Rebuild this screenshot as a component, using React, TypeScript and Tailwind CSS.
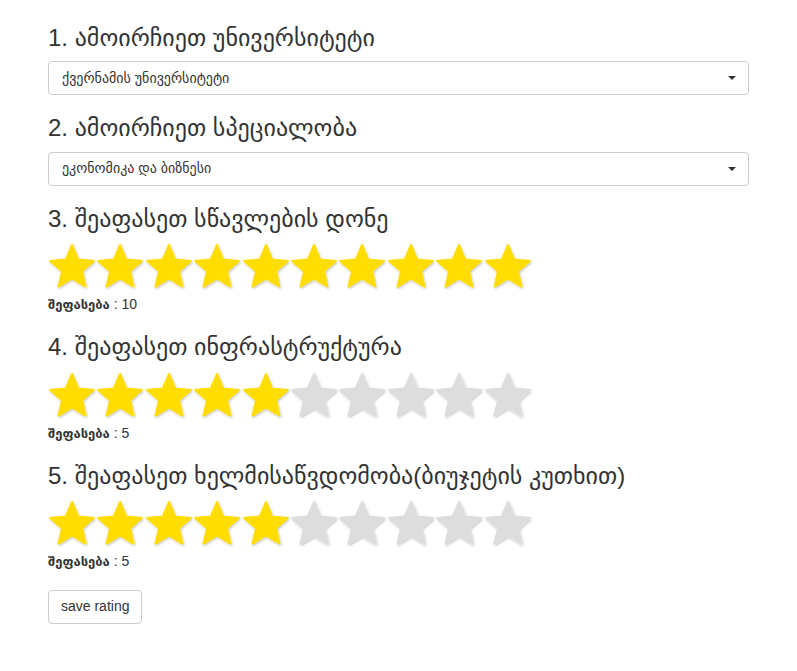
import React from "react";

const font = { fontFamily: '"Liberation Sans", "DejaVu Sans", sans-serif' };

function Star({ on }: { on: boolean }) {
  const fill = on ? "#FFDD00" : "#DDDDDD";
  return (
    <svg width="48.4" height="52" viewBox="0 0 48.4 52" className="block shrink-0">
      <defs>
        <filter id={on ? "sh1" : "sh0"} x="-10%" y="-10%" width="130%" height="130%">
          <feDropShadow dx="0.8" dy="1.2" stdDeviation="0.8" floodColor="#000" floodOpacity="0.25" />
        </filter>
      </defs>
      <polygon
        points="24,3 30.17,17.51 45.87,18.89 33.99,29.24 37.52,44.61 24,36.5 10.48,44.61 14.01,29.24 2.13,18.89 17.83,17.51"
        fill={fill}
        stroke={fill}
        strokeWidth="2"
        strokeLinejoin="round"
        filter={`url(#${on ? "sh1" : "sh0"})`}
      />
    </svg>
  );
}

function Stars({ value }: { value: number }) {
  return (
    <div className="flex h-[52px]">
      {Array.from({ length: 10 }).map((_, i) => (
        <Star key={i} on={i < value} />
      ))}
    </div>
  );
}

function Heading({ children }: { children: React.ReactNode }) {
  return (
    <h3 className="mt-[20px] mb-[10px] text-[24px] leading-[1.1] text-[#333]">{children}</h3>
  );
}

function Select({ text }: { text: string }) {
  return (
    <div className="flex h-[34px] items-center justify-between rounded-[4px] border border-[#ccc] bg-white pl-[13px] pr-[12px] text-[14px] text-[#333]">
      <span>{text}</span>
      <span className="h-0 w-0 border-x-[4px] border-t-[4px] border-x-transparent border-t-[#333]" />
    </div>
  );
}

function Rating({ value }: { value: number }) {
  return (
    <div className="mb-[2px] h-[20px] text-[14px] leading-[20px] text-[#333]">
      <b className="text-[13px]">შეფასება</b> : {value}
    </div>
  );
}

export default function App() {
  return (
    <div className="min-h-[671px] bg-white px-[48px] pt-[5px]" style={font}>
      <Heading>1. ამოირჩიეთ უნივერსიტეტი</Heading>
      <Select text="ქვერნამის უნივერსიტეტი" />
      <Heading>2. ამოირჩიეთ სპეციალობა</Heading>
      <Select text="ეკონომიკა და ბიზნესი" />
      <Heading>3. შეაფასეთ სწავლების დონე</Heading>
      <Stars value={10} />
      <Rating value={10} />
      <Heading>4. შეაფასეთ ინფრასტრუქტურა</Heading>
      <Stars value={5} />
      <Rating value={5} />
      <Heading>5. შეაფასეთ ხელმისაწვდომობა(ბიუჯეტის კუთხით)</Heading>
      <Stars value={5} />
      <Rating value={5} />
      <button className="mt-[17px] h-[34px] rounded-[4px] border border-[#ccc] bg-white px-[12px] text-[14px] text-[#333]">
        save rating
      </button>
    </div>
  );
}
